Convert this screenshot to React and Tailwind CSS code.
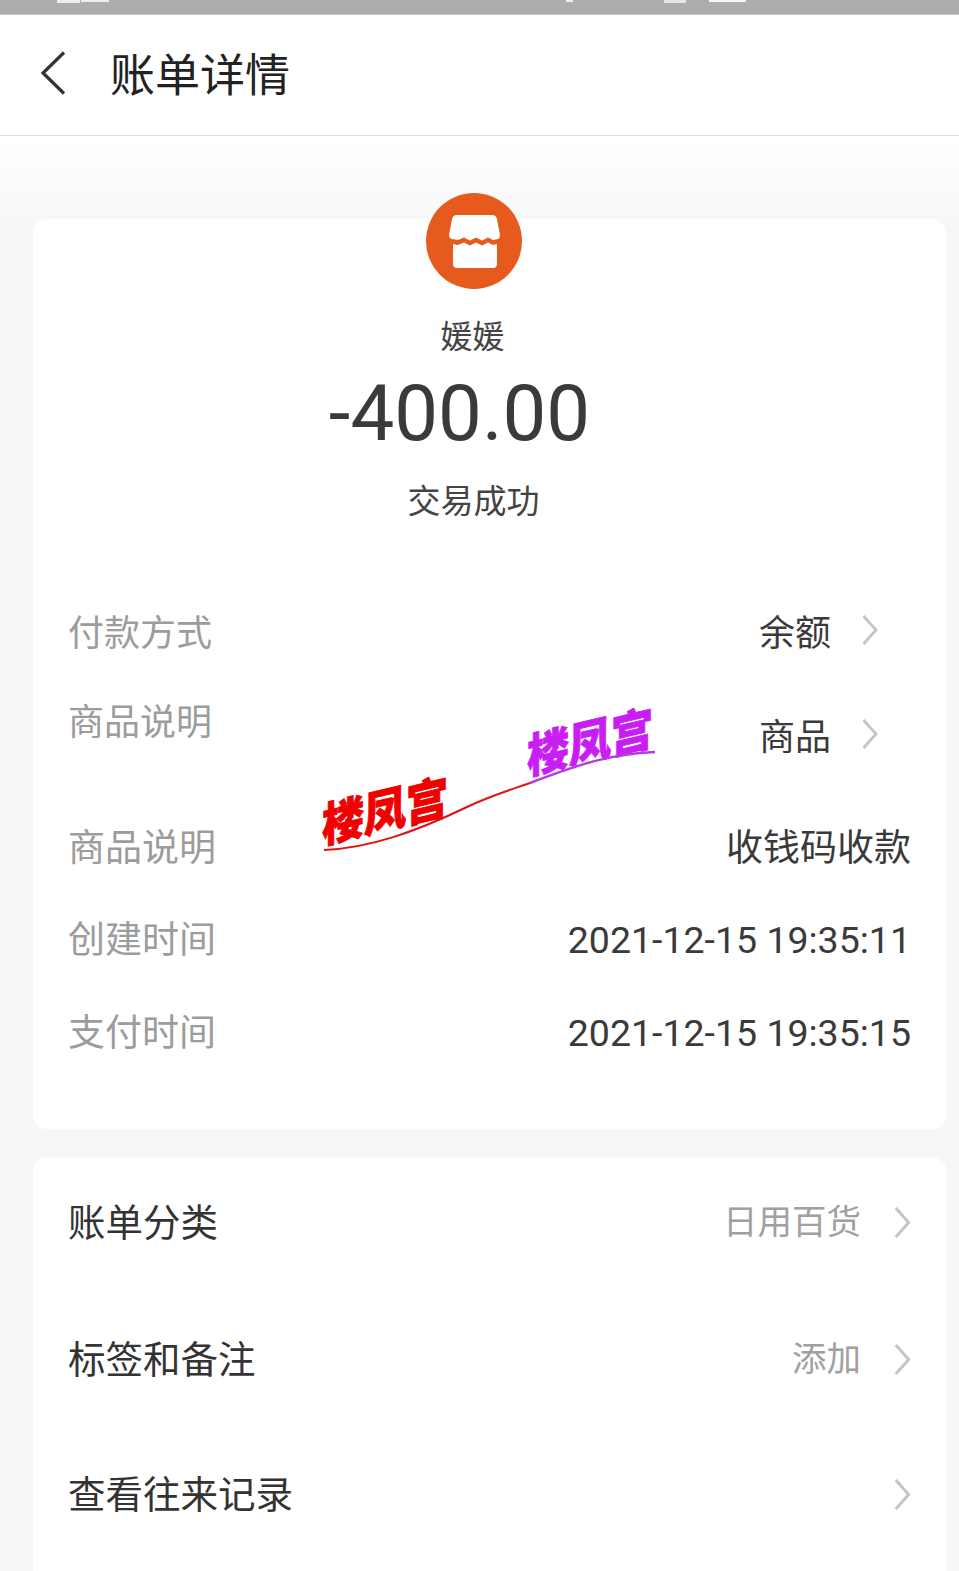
import React from 'react';

const fontStack = { fontFamily: '"Noto Sans CJK SC", sans-serif' };
const numberFont = { fontFamily: 'Roboto, "Noto Sans CJK SC", sans-serif' };

const Chevron = ({ className, color = '#c4c4c4' }) => (
  <svg viewBox="0 0 16 30" className={className} fill="none" stroke={color} strokeWidth="2.8">
    <path d="M1.5 1 L14 15 L1.5 29" />
  </svg>
);

const StoreIcon = () => (
  <div className="w-[96px] h-[96px] rounded-full bg-[#e65a1e] flex items-center justify-center">
    <svg viewBox="0 0 96 96" className="w-[96px] h-[96px]" fill="#fff">
      <path d="M26 26 Q27 22 31 22 L66 22 Q70 22 71 26 L74 42 Q74 45 72 46 L67 47 L62 44.5 L56 47.5 L50 44.5 L44 47.5 L38 44.5 L32 47 L26 46 Q23 45 23 42 Z" />
      <path d="M27 51 L32 52 L38 49.5 L44 52.5 L50 49.5 L56 52.5 L62 49.5 L67 52 L71 51 L71 71 Q71 75 67 75 L31 75 Q27 75 27 71 Z" />
    </svg>
  </div>
);

const InfoRow = ({ label, value, height, chevron, labelSize = 'text-[37px]', valueClass = 'text-[37px]', numeric }) => (
  <div className={`flex justify-between items-start ${height}`}>
    <span className={`${labelSize} leading-[50px] text-[#9c9c9c]`}>{label}</span>
    <span className={`flex items-center leading-[50px] text-[#3a3a3a] ${valueClass}`} style={numeric ? numberFont : undefined}>
      {value}
      {chevron && <Chevron className="w-[16px] h-[30px] ml-[31px] mr-[33px]" />}
    </span>
  </div>
);

const LinkRow = ({ label, value, className = '' }) => (
  <div className={`flex justify-between items-center h-[100px] ${className}`}>
    <span className="text-[37.5px] text-[#333]">{label}</span>
    <span className="flex items-center text-[34.5px] text-[#a0a0a0]">
      {value}
      <Chevron className="w-[17px] h-[31px] ml-[33px] mt-[4px]" />
    </span>
  </div>
);

const Watermark = () => (
  <div className="absolute left-0 top-0 pointer-events-none" aria-hidden="true">
    <span className="absolute left-[322px] top-[778px] text-[42px] leading-[60px] font-black text-[#f00000] [-webkit-text-stroke:0.8px_#f00000] whitespace-nowrap -skew-y-12 scale-y-[1.12]">楼凤宫</span>
    <span className="absolute left-[527px] top-[709px] text-[42px] leading-[60px] font-black text-[#c81ef5] [-webkit-text-stroke:0.8px_#c81ef5] whitespace-nowrap -skew-y-12 scale-y-[1.12]">楼凤宫</span>
    <svg className="absolute left-0 top-0 w-[959px] h-[900px]" viewBox="0 0 959 900" fill="none" strokeWidth="2">
      <path d="M324 850 C 370 848 415 832 467 807 C 490 796 510 790 530 783" stroke="#dc1414" />
      <path d="M530 783 C 580 764 610 754 655 752" stroke="#b43ce6" strokeWidth="2.5" />
    </svg>
  </div>
);

export default function App() {
  return (
    <div className="relative w-[959px] h-[1571px] overflow-hidden bg-[#f7f7f7]" style={fontStack}>
      <div className="h-[15px] bg-[#adadad] border-b border-[#c4c4c4] flex items-start">
        <div className="ml-[57px] w-[23px] h-[3px] bg-white/80" />
        <div className="ml-[1px] w-[28px] h-[2px] bg-white/80" />
        <div className="ml-[457px] w-[7px] h-[2px] bg-white/80" />
        <div className="ml-[91px] w-[22px] h-[3px] bg-white/70" />
        <div className="ml-[23px] w-[37px] h-[2px] bg-white/90" />
      </div>

      <header className="h-[121px] bg-white border-b border-[#dcdcdc] flex items-center pl-[40px]">
        <svg viewBox="0 0 26 44" className="w-[26px] h-[44px] -mt-[4px]" fill="none" stroke="#333" strokeWidth="3.2">
          <path d="M24 1.5 L3 22 L24 42.5" />
        </svg>
        <h1 className="ml-[44px] text-[45px] font-normal text-[#222] -mt-[4px]">账单详情</h1>
      </header>

      <main className="h-[1435px] bg-gradient-to-b from-white to-[#f7f7f7] bg-[length:100%_90px] bg-no-repeat pl-[33px] pr-[13px] pt-[83px]">
        <section className="relative h-[910px] bg-white rounded-[14px] pl-[35px] pr-[35px]">
          <div className="absolute left-[393px] top-[-26px]">
            <StoreIcon />
          </div>
          <div className="flex flex-col items-center pt-[92px]">
            <div className="text-[32px] leading-[46px] text-[#444] -ml-[34px]">媛媛</div>
            <div className="text-[78px] leading-[90px] mt-[12px] text-[#3a3a3a] -ml-[60px]" style={numberFont}>-400.00</div>
            <div className="text-[33px] leading-[46px] mt-[17px] text-[#444] -ml-[32px]">交易成功</div>
          </div>

          <div className="mt-[83px]">
            <InfoRow label="付款方式" value="余额" height="h-[89px]" labelSize="text-[36px]" valueClass="text-[36px]" chevron />
            <div className="relative">
              <InfoRow label="商品说明" value="" height="h-[126px]" labelSize="text-[36px]" />
              <div className="absolute right-0 top-[15px]">
                <InfoRow value="商品" height="h-[50px]" valueClass="text-[36px]" chevron />
              </div>
            </div>
            <InfoRow label="商品说明" value="收钱码收款" height="h-[92px]" />
            <InfoRow label="创建时间" value="2021-12-15 19:35:11" height="h-[93px]" valueClass="text-[37.5px] pt-[3px]" numeric />
            <InfoRow label="支付时间" value="2021-12-15 19:35:15" height="h-[50px]" valueClass="text-[37.5px] pt-[3px]" numeric />
          </div>
        </section>

        <section className="mt-[28px] h-[500px] bg-white rounded-[14px] pl-[35px] pr-[35px] pt-[13px]">
          <LinkRow label="账单分类" value="日用百货" />
          <LinkRow label="标签和备注" value="添加" className="mt-[37px]" />
          <LinkRow label="查看往来记录" className="mt-[35px]" />
        </section>
      </main>

      <Watermark />
    </div>
  );
}
